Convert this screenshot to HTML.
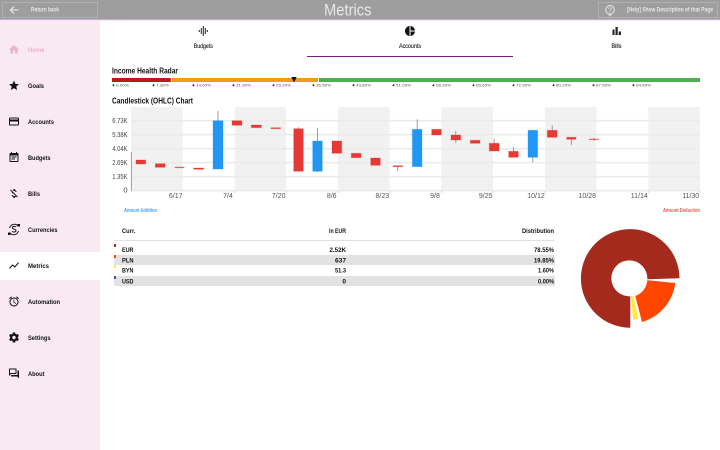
<!DOCTYPE html>
<html><head><meta charset="utf-8"><style>
html,body{margin:0;padding:0;background:#fff;width:720px;height:450px;overflow:hidden}
svg{display:block}
text{font-family:"Liberation Sans",sans-serif}
.n{font-size:6.5px;font-weight:700;fill:#111}
.tb{font-size:6.5px;font-weight:400;fill:#111;stroke:#111;stroke-width:.12}
.t{font-size:8px;font-weight:700;fill:#111}
.y{font-size:7.5px;fill:#444;text-anchor:end}
.x{font-size:7px;fill:#555;text-anchor:middle}
.p{font-size:4px;fill:#555}
.d{fill:#222}
.c{font-size:6.5px;font-weight:700;fill:#111}
.r{text-anchor:end}
.red{fill:#e53935;stroke:#e53935;stroke-opacity:.3;stroke-width:1}
.blue{fill:#2196f3;stroke:#2196f3;stroke-opacity:.3;stroke-width:1}
.w{stroke:#888;stroke-width:.8}
.g{fill:#f1f1f1}
.l{stroke:#ebebeb;stroke-width:1.6}
</style></head><body>
<svg width="720" height="450" viewBox="0 0 720 450" xmlns="http://www.w3.org/2000/svg">
<rect width="720" height="450" fill="#fff"/>
<!-- header -->
<rect width="720" height="19" fill="#9e9e9e"/>
<rect y="19" width="720" height="1.2" fill="#c8a9cf"/>
<rect x="2.5" y="2.5" width="95" height="15" fill="none" stroke="#b5b5b5" stroke-width=".8"/>
<path d="M18.5 10H11M14 6.5L10.5 10 14 13.5" fill="none" stroke="#f2f2f2" stroke-width="1"/>
<text x="31" y="11.5" font-size="6" font-weight="700" fill="#e6e6e6" textLength="28" lengthAdjust="spacingAndGlyphs">Return back</text>
<text x="324" y="15.5" font-size="17" fill="#e8e8e8" textLength="47.5" lengthAdjust="spacingAndGlyphs">Metrics</text>
<rect x="598.5" y="2.5" width="119" height="15" fill="none" stroke="#b5b5b5" stroke-width=".8"/>
<circle cx="610" cy="9.8" r="4.3" fill="none" stroke="#eee" stroke-width=".9"/>
<path d="M608.5 13.8L610 16 611.500 13.800" fill="none" stroke="#eee" stroke-width=".8"/>
<text x="610" y="12.3" font-size="7" fill="#eee" text-anchor="middle">?</text>
<text x="627" y="11.5" font-size="6" font-weight="700" fill="#e6e6e6" textLength="86" lengthAdjust="spacingAndGlyphs">[Help] Show Description of that Page</text>
<!-- sidebar -->
<rect y="20" width="100" height="430" fill="#f8e9f2"/>
<rect y="252" width="100" height="28" fill="#fff"/>
<g transform="translate(8,43.5) scale(.5)"><path fill="#e8b4cf" d="M10 20v-6h4v6h5v-8h3L12 3 2 12h3v8z"/></g>
<g transform="translate(8,79.5) scale(.5)"><path fill="#111" d="M12 17.27L18.18 21l-1.64-7.03L22 9.24l-7.19-.61L12 2 9.19 8.63 2 9.24l5.46 4.73L5.82 21z"/></g>
<g transform="translate(8,115.5) scale(.5)"><path fill="#111" d="M20 4H4c-1.11 0-1.99.89-1.99 2L2 18c0 1.11.89 2 2 2h16c1.11 0 2-.89 2-2V6c0-1.11-.89-2-2-2zm0 14H4v-6h16v6zm0-10H4V6h16v2z"/></g>
<g transform="translate(8,151.5) scale(.5)"><path fill="#111" d="M17 10H7v2h10v-2zm2-7h-1V1h-2v2H8V1H6v2H5c-1.11 0-1.99.9-1.99 2L3 19c0 1.1.89 2 2 2h14c1.1 0 2-.9 2-2V5c0-1.1-.9-2-2-2zm0 16H5V8h14v11zm-5-5H7v2h7v-2z"/></g>
<g transform="translate(8,187.5) scale(.5)"><path fill="#111" d="M12.5 6.9c1.78 0 2.44.85 2.5 2.1h2.21c-.07-1.72-1.12-3.3-3.21-3.81V3h-3v2.16c-.53.12-1.03.3-1.48.54l1.47 1.47c.41-.17.91-.27 1.51-.27zM5.33 4.06L4.06 5.33 7.5 8.77c0 2.08 1.56 3.21 3.91 3.91l3.51 3.51c-.34.48-1.05.91-2.42.91-2.06 0-2.87-.92-2.98-2.1h-2.2c.12 2.19 1.76 3.42 3.68 3.83V21h3v-2.15c.96-.18 1.82-.55 2.45-1.12l2.22 2.22 1.27-1.27L5.33 4.06z"/></g>
<g fill="none" stroke="#111" stroke-width=".9">
<path d="M9.600 228A4.800 4.800 0 0 1 17.800 225.800"/>
<path d="M18.400 231A4.800 4.800 0 0 1 10.200 233.200"/>
<path d="M16 227c-.8-1-3.600-1-3.600.800 0 1.700 3.600 1.100 3.600 2.800 0 1.700-3 1.700-3.900.700" stroke-width="1"/>
</g>
<path d="M8 232.500h2.500v2.500H8zM17.500 224h2.500v2.500h-2.500z" fill="#111"/>
<g transform="translate(8,259.5) scale(.5)"><path fill="#111" d="M3.500 18.490l6-6.010 4 4L22 6.920l-1.410-1.410-7.090 7.970-4-4L2 16.990z"/></g>
<g transform="translate(8,295.5) scale(.5)"><path fill="#111" d="M22 5.720l-4.600-3.860-1.290 1.530 4.600 3.860L22 5.720zM7.880 3.390L6.600 1.860 2 5.710l1.290 1.530 4.590-3.850zM12.500 8H11v6l4.750 2.850.75-1.230-4-2.370V8zM12 4c-4.970 0-9 4.030-9 9s4.020 9 9 9c4.970 0 9-4.030 9-9s-4.030-9-9-9zm0 16c-3.870 0-7-3.130-7-7s3.130-7 7-7 7 3.130 7 7-3.130 7-7 7z"/></g>
<g transform="translate(8,331.5) scale(.5)"><path fill="#111" d="M19.430 12.980c.04-.32.07-.64.07-.98s-.03-.66-.07-.98l2.110-1.650c.19-.15.24-.42.12-.64l-2-3.460c-.12-.22-.39-.3-.61-.22l-2.490 1c-.52-.4-1.080-.73-1.690-.98l-.38-2.650C14.460 2.180 14.250 2 14 2h-4c-.25 0-.46.18-.49.42l-.38 2.650c-.61.25-1.170.59-1.690.98l-2.490-1c-.23-.09-.49 0-.61.22l-2 3.460c-.13.22-.07.49.12.64l2.110 1.650c-.04.32-.07.65-.07.98s.03.66.07.98l-2.110 1.650c-.19.15-.24.42-.12.64l2 3.460c.12.22.39.3.61.22l2.490-1c.52.4 1.080.73 1.690.98l.38 2.650c.03.24.24.42.49.42h4c.25 0 .46-.18.49-.42l.38-2.650c.61-.25 1.170-.59 1.690-.98l2.490 1c.23.09.49 0 .61-.22l2-3.460c.12-.22.07-.49-.12-.64l-2.110-1.650zM12 15.500c-1.930 0-3.500-1.570-3.500-3.500s1.570-3.500 3.500-3.500 3.500 1.570 3.500 3.500-1.570 3.500-3.500 3.500z"/></g>
<g transform="translate(8,367.5) scale(.5)"><path fill="#111" d="M15 4v7H5.170L4 12.170V4h11m1-2H3c-.55 0-1 .45-1 1v14l4-4h10c.55 0 1-.45 1-1V3c0-.55-.45-1-1-1zm5 4h-2v9H6v2c0 .55.45 1 1 1h11l4 4V7c0-.55-.45-1-1-1z"/></g>
<text class="n" x="28" y="52" style="fill:#e8b4cf" textLength="16.5" lengthAdjust="spacingAndGlyphs">Home</text>
<text class="n" x="28" y="88" textLength="16" lengthAdjust="spacingAndGlyphs">Goals</text>
<text class="n" x="28" y="124" textLength="26" lengthAdjust="spacingAndGlyphs">Accounts</text>
<text class="n" x="28" y="160" textLength="22.5" lengthAdjust="spacingAndGlyphs">Budgets</text>
<text class="n" x="28" y="196" textLength="12" lengthAdjust="spacingAndGlyphs">Bills</text>
<text class="n" x="28" y="232" textLength="29.5" lengthAdjust="spacingAndGlyphs">Currencies</text>
<text class="n" x="28" y="268" textLength="21" lengthAdjust="spacingAndGlyphs">Metrics</text>
<text class="n" x="28" y="304" textLength="32" lengthAdjust="spacingAndGlyphs">Automation</text>
<text class="n" x="28" y="340" textLength="22.5" lengthAdjust="spacingAndGlyphs">Settings</text>
<text class="n" x="28" y="376" textLength="16.5" lengthAdjust="spacingAndGlyphs">About</text>
<!-- tabs -->
<g transform="translate(197.3,25) scale(.5)"><path fill="#222" d="M7 18h2V6H7v12zm4 4h2V2h-2v20zm-8-8h2v-4H3v4zm12 4h2V6h-2v12zm4-8v4h2v-4h-2z"/></g>
<g transform="translate(404,25) scale(.5)"><path fill="#111" d="M11 2v20c-5.07-.5-9-4.79-9-10s3.93-9.5 9-10zm2.03 0v8.99H22c-.47-4.74-4.24-8.52-8.97-8.99zm0 11.01V22c4.74-.47 8.5-4.25 8.97-8.99h-8.97z"/></g>
<path d="M612.5 29.5h2V35h-2zM615.5 27h2.200v8h-2.200zM618.700 31.500h2.300V35h-2.300z" fill="#222"/>
<text class="tb" x="193.8" y="48" textLength="19" lengthAdjust="spacingAndGlyphs">Budgets</text>
<text class="tb" x="399" y="48" textLength="22" lengthAdjust="spacingAndGlyphs">Accounts</text>
<text class="tb" x="611.5" y="48" textLength="10" lengthAdjust="spacingAndGlyphs">Bills</text>
<rect x="307" y="56" width="206" height="1" fill="#7b1f7b"/>
<!-- radar -->
<text class="t" x="112" y="73.5" textLength="66" lengthAdjust="spacingAndGlyphs">Income Health Radar</text>
<rect x="112" y="78" width="58.8" height="4" fill="#b71c1c"/>
<rect x="171.7" y="78" width="146.3" height="4" fill="#f39c12"/>
<rect x="319" y="78" width="381" height="4" fill="#4caf50"/>
<path d="M291.3 77H296.7L294 82.5z" fill="#111"/>
<g class="d">
<path d="M113.500 84l1.200 1.200-1.200 1.200-1.200-1.200zM153.500 84l1.200 1.200-1.200 1.200-1.200-1.200zM193.500 84l1.200 1.200-1.200 1.200-1.200-1.200zM233.500 84l1.200 1.200-1.200 1.200-1.200-1.200zM273.500 84l1.200 1.200-1.200 1.200-1.200-1.200zM313.500 84l1.200 1.200-1.200 1.200-1.200-1.200zM353.500 84l1.200 1.200-1.200 1.200-1.200-1.200zM393.500 84l1.200 1.200-1.200 1.200-1.200-1.200zM433.500 84l1.200 1.200-1.200 1.200-1.200-1.200zM473.500 84l1.200 1.200-1.200 1.200-1.200-1.200zM513.500 84l1.200 1.200-1.200 1.200-1.200-1.200zM553.500 84l1.200 1.200-1.200 1.200-1.200-1.200zM593.500 84l1.200 1.200-1.200 1.200-1.200-1.200zM633.500 84l1.200 1.200-1.200 1.200-1.200-1.200z"/>
</g>
<text class="p" x="116" y="86.7" textLength="13" lengthAdjust="spacingAndGlyphs">0.00%</text>
<text class="p" x="156" y="86.7" textLength="13" lengthAdjust="spacingAndGlyphs">7.30%</text>
<text class="p" x="196" y="86.7" textLength="15" lengthAdjust="spacingAndGlyphs">14.60%</text>
<text class="p" x="236" y="86.7" textLength="15" lengthAdjust="spacingAndGlyphs">21.90%</text>
<text class="p" x="276" y="86.7" textLength="15" lengthAdjust="spacingAndGlyphs">29.20%</text>
<text class="p" x="316" y="86.7" textLength="15" lengthAdjust="spacingAndGlyphs">36.50%</text>
<text class="p" x="356" y="86.7" textLength="15" lengthAdjust="spacingAndGlyphs">43.80%</text>
<text class="p" x="396" y="86.7" textLength="15" lengthAdjust="spacingAndGlyphs">51.09%</text>
<text class="p" x="436" y="86.7" textLength="15" lengthAdjust="spacingAndGlyphs">58.39%</text>
<text class="p" x="476" y="86.7" textLength="15" lengthAdjust="spacingAndGlyphs">65.69%</text>
<text class="p" x="516" y="86.7" textLength="15" lengthAdjust="spacingAndGlyphs">72.99%</text>
<text class="p" x="556" y="86.7" textLength="15" lengthAdjust="spacingAndGlyphs">80.29%</text>
<text class="p" x="596" y="86.7" textLength="15" lengthAdjust="spacingAndGlyphs">87.59%</text>
<text class="p" x="636" y="86.7" textLength="15" lengthAdjust="spacingAndGlyphs">94.89%</text>
<!-- chart -->
<text class="t" x="112" y="103.5" textLength="81" lengthAdjust="spacingAndGlyphs">Candlestick (OHLC) Chart</text>
<rect class="g" x="131" y="107" width="51.7" height="84"/>
<rect class="g" x="234.7" y="107" width="51.3" height="84"/>
<rect class="g" x="338" y="107" width="51.7" height="84"/>
<rect class="g" x="441.3" y="107" width="51.7" height="84"/>
<rect class="g" x="545" y="107" width="51.3" height="84"/>
<rect class="g" x="648.3" y="107" width="51.7" height="84"/>
<path class="l" d="M131 120.700H700M131 134.700H700M131 148.700H700M131 162.700H700M131 176.700H700M131 190.700H700"/>
<path d="M131.300 152V191" stroke="#888" stroke-width=".8"/>
<path d="M234.700 191v2M286 191v2M338 191v2M389.700 191v2M441.300 191v2M493 191v2M545 191v2M596.300 191v2M648.300 191v2M700 191v2" stroke="#ccc" stroke-width=".7"/>
<text class="y" x="127.5" y="122.8" textLength="15.3" lengthAdjust="spacingAndGlyphs">6.73K</text>
<text class="y" x="127.5" y="136.8" textLength="15.3" lengthAdjust="spacingAndGlyphs">5.38K</text>
<text class="y" x="127.5" y="150.8" textLength="15.3" lengthAdjust="spacingAndGlyphs">4.04K</text>
<text class="y" x="127.5" y="164.8" textLength="15.3" lengthAdjust="spacingAndGlyphs">2.69K</text>
<text class="y" x="127.5" y="178.8" textLength="15.3" lengthAdjust="spacingAndGlyphs">1.35K</text>
<text class="y" x="127.5" y="192.3">0</text>
<text class="x" x="175.7" y="198">6/17</text>
<text class="x" x="228" y="198">7/4</text>
<text class="x" x="278.7" y="198">7/20</text>
<text class="x" x="331.7" y="198">8/6</text>
<text class="x" x="382.3" y="198">8/23</text>
<text class="x" x="435" y="198">9/8</text>
<text class="x" x="485.7" y="198">9/25</text>
<text class="x" x="536" y="198">10/12</text>
<text class="x" x="587.3" y="198">10/28</text>
<text class="x" x="639.3" y="198">11/14</text>
<text class="x" x="690.7" y="198">11/30</text>
<!-- wicks -->
<path class="w" d="M218 111V121M298.500 127.300V129M317.500 128V172M397.800 166V171M417.200 119.300V130M455.800 131V142.700M494.200 139V144M513.500 147V152M532.800 129.700V162.300M552.200 125.300V131M571.300 139V145M594 137.700V140.700"/>
<!-- candles -->
<rect class="red" x="136" y="160" width="9.7" height="4"/>
<rect class="red" x="155.3" y="163.7" width="9.7" height="3.6"/>
<rect class="red" x="175" y="167" width="9" height=".7"/>
<rect class="red" x="193.7" y="168" width="10" height="1.3"/>
<rect class="blue" x="213" y="120.7" width="10" height="48.3"/>
<rect class="red" x="232" y="120.7" width="10" height="4.6"/>
<rect class="red" x="251.3" y="125" width="10" height="2.7"/>
<rect class="red" x="271" y="127.7" width="9.7" height="1"/>
<rect class="red" x="293.7" y="128.7" width="9.6" height="42.6"/>
<rect class="blue" x="312.7" y="141" width="9.6" height="30.3"/>
<rect class="red" x="332" y="141" width="9.7" height="12.3"/>
<rect class="red" x="351.3" y="153.3" width="9.7" height="4.4"/>
<rect class="red" x="370.7" y="158" width="9.6" height="7.3"/>
<rect class="red" x="393" y="165.7" width="9.7" height="1"/>
<rect class="blue" x="412.3" y="129.3" width="9.7" height="37.4"/>
<rect class="red" x="431.7" y="129.3" width="9.6" height="5.7"/>
<rect class="red" x="451" y="135" width="9.7" height="5"/>
<rect class="red" x="470.3" y="140.3" width="9.7" height="3"/>
<rect class="red" x="489.3" y="143.3" width="9.7" height="7.7"/>
<rect class="red" x="508.7" y="151.3" width="9.6" height="6"/>
<rect class="blue" x="528" y="130.3" width="9.7" height="27"/>
<rect class="red" x="547.3" y="130.3" width="9.7" height="7"/>
<rect class="red" x="566.7" y="137.3" width="9.3" height="2"/>
<rect class="red" x="589.3" y="139" width="9.4" height=".6"/>
<text x="124" y="212" font-size="5" font-weight="700" fill="#42a5f5" textLength="33" lengthAdjust="spacingAndGlyphs">Amount Addition</text>
<text x="663" y="212" font-size="5" font-weight="700" fill="#ef5350" textLength="37" lengthAdjust="spacingAndGlyphs">Amount Deduction</text>
<!-- table -->
<text class="c" x="122" y="233" textLength="13.5" lengthAdjust="spacingAndGlyphs">Curr.</text>
<text class="c r" x="346" y="233" textLength="17" lengthAdjust="spacingAndGlyphs">In EUR</text>
<text class="c r" x="554" y="233" textLength="32" lengthAdjust="spacingAndGlyphs">Distribution</text>
<rect x="114" y="240" width="441" height="1" fill="#e0e0e0"/>
<rect x="114" y="255" width="441" height="10" fill="#e2e2e2"/>
<rect x="114" y="276" width="441" height="10" fill="#e2e2e2"/>
<rect x="114" y="244" width="2" height="3" fill="#a52a1e"/>
<rect x="114" y="255" width="2" height="3" fill="#ff4500"/>
<rect x="114" y="265" width="2" height="3" fill="#ffeb3b"/>
<rect x="114" y="276" width="2" height="3" fill="#673ab7"/>
<text class="c" x="122" y="252" textLength="11.5" lengthAdjust="spacingAndGlyphs">EUR</text>
<text class="c" x="122" y="262.3" textLength="11.5" lengthAdjust="spacingAndGlyphs">PLN</text>
<text class="c" x="122" y="272.5" textLength="11.5" lengthAdjust="spacingAndGlyphs">BYN</text>
<text class="c" x="122" y="283.5" textLength="11.5" lengthAdjust="spacingAndGlyphs">USD</text>
<text class="c r" x="346" y="252" textLength="16.5" lengthAdjust="spacingAndGlyphs">2.52K</text>
<text class="c r" x="346" y="262.3" textLength="11" lengthAdjust="spacingAndGlyphs">637</text>
<text class="c r" x="346" y="272.5" textLength="11" lengthAdjust="spacingAndGlyphs">51.3</text>
<text class="c r" x="346" y="283.5">0</text>
<text class="c r" x="554" y="252" textLength="20" lengthAdjust="spacingAndGlyphs">78.55%</text>
<text class="c r" x="554" y="262.3" textLength="20" lengthAdjust="spacingAndGlyphs">19.85%</text>
<text class="c r" x="554" y="272.5" textLength="16" lengthAdjust="spacingAndGlyphs">1.60%</text>
<text class="c r" x="554" y="283.5" textLength="16" lengthAdjust="spacingAndGlyphs">0.00%</text>
<!-- pie -->
<path fill="#a52a1e" d="M679.5 278.3A49.3 49.3 0 1 0 630.3 327.7L630.3 296.3A18 18 0 1 1 647.3 279.3Z"/>
<path fill="#ff4500" d="M647.3 280.3L675.3 283A47 47 0 0 1 642 322L635.3 296A18 18 0 0 0 647.3 280.3Z"/>
<path fill="#ffeb3b" d="M630.8 296.3L633.5 296L638.3 318.7L633.3 320Z"/>
</svg>
</body></html>
